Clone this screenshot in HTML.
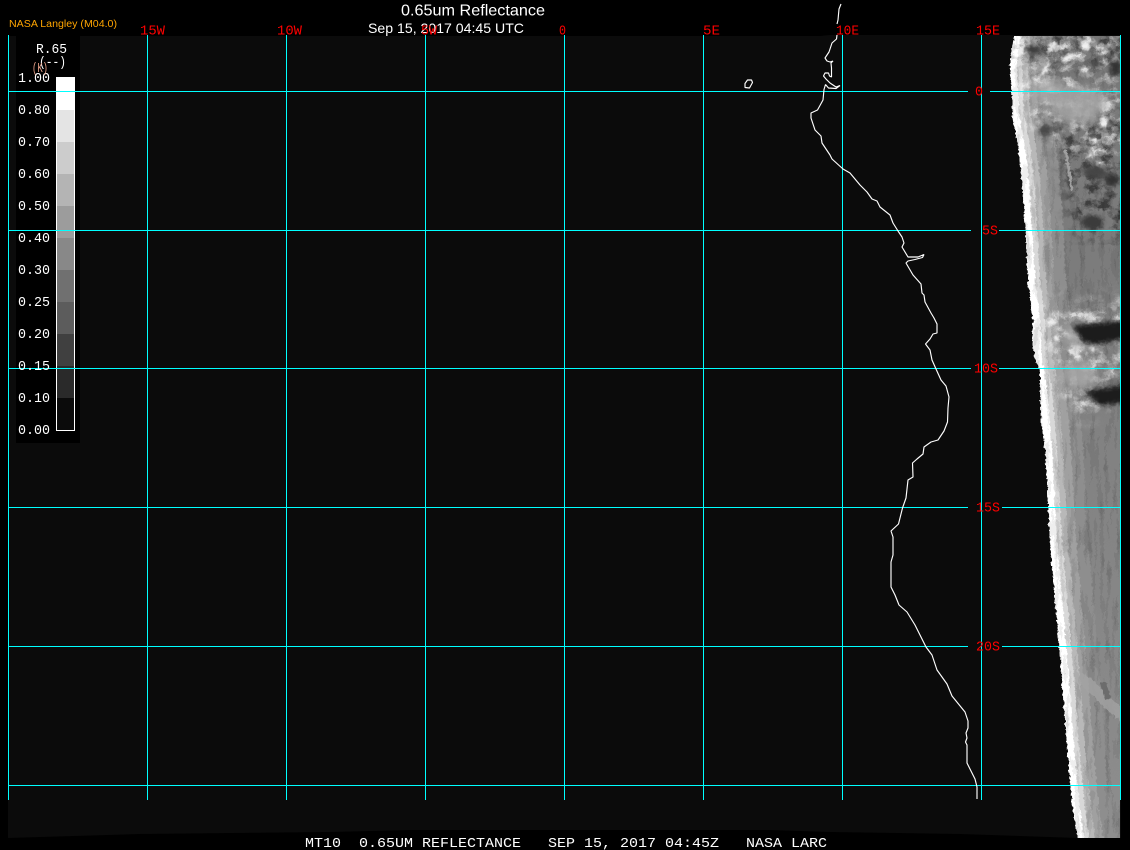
<!DOCTYPE html>
<html lang="en"><head><meta charset="utf-8"><title>0.65um Reflectance</title>
<style>
html,body{margin:0;padding:0;background:#000;width:1130px;height:850px;overflow:hidden}
svg{display:block}
.m{font-family:"Liberation Mono",monospace;font-size:14px}
.s{font-family:"Liberation Sans",sans-serif}
</style></head><body>
<svg width="1130" height="850" viewBox="0 0 1130 850" xmlns="http://www.w3.org/2000/svg">
<defs>
<clipPath id="outer"><rect x="990" y="36" width="130" height="802"/></clipPath>
<clipPath id="disk"><polygon points="1017,20 1012,48 1010,60 1011,78 1012,91 1012,115 1016,135 1021,170 1024,210 1026,240 1028,280 1033,320 1032,340 1035,360 1040,370 1040,390 1041,420 1045,450 1047,480 1050,540 1054,590 1057,620 1059,646 1062,680 1064,710 1067,745 1070,780 1073,810 1078,838 1080,855 1140,855 1140,20"/></clipPath>
<linearGradient id="base" x1="0" y1="0" x2="0" y2="1"><stop offset="0" stop-color="#787878"/><stop offset=".3" stop-color="#7c7c7c"/><stop offset=".6" stop-color="#848484"/><stop offset="1" stop-color="#8e8e8e"/></linearGradient>
<filter id="jit" filterUnits="userSpaceOnUse" x="990" y="15" width="160" height="845" color-interpolation-filters="sRGB"><feTurbulence type="fractalNoise" baseFrequency="0.3" numOctaves="2" seed="3" result="n"/><feDisplacementMap in="SourceGraphic" in2="n" scale="4" xChannelSelector="R" yChannelSelector="G"/></filter>
<filter id="cl" x="0" y="0" width="100%" height="100%"><feTurbulence type="fractalNoise" baseFrequency="0.07 0.09" numOctaves="4" seed="11"/><feColorMatrix values="0 0 0 0 1  0 0 0 0 1  0 0 0 0 1  2.6 0 0 0 -1.0"/><feComponentTransfer><feFuncA type="discrete" tableValues="0 .1 .22 .36 .52 .75"/></feComponentTransfer></filter>
<filter id="dk" x="0" y="0" width="100%" height="100%"><feTurbulence type="fractalNoise" baseFrequency="0.08 0.1" numOctaves="4" seed="29"/><feColorMatrix values="0 0 0 0 0  0 0 0 0 0  0 0 0 0 0  2.8 0 0 0 -1.1"/><feComponentTransfer><feFuncA type="discrete" tableValues="0 .1 .22 .36 .5"/></feComponentTransfer></filter>
<filter id="st" x="0" y="0" width="100%" height="100%"><feTurbulence type="fractalNoise" baseFrequency="0.2 0.025" numOctaves="3" seed="5"/><feColorMatrix values="0 0 0 0 0  0 0 0 0 0  0 0 0 0 0  1.6 0 0 0 -0.62"/><feComponentTransfer><feFuncA type="discrete" tableValues="0 .07 .14 .2"/></feComponentTransfer></filter>
<filter id="b1"><feGaussianBlur stdDeviation="1.2"/></filter>
<filter id="b2"><feGaussianBlur stdDeviation="2"/></filter>
<filter id="b4"><feGaussianBlur stdDeviation="4"/></filter>
<filter id="b9"><feGaussianBlur stdDeviation="9"/></filter>
<mask id="mcl" maskUnits="userSpaceOnUse" x="990" y="15" width="160" height="440"><g fill="#fff" filter="url(#b9)"><polygon points="1015,15 1145,15 1145,150 1090,170 1040,130 1015,110"/><polygon points="1040,305 1145,295 1145,345 1095,420 1070,410 1050,360"/></g></mask>
<mask id="mdk" maskUnits="userSpaceOnUse" x="990" y="15" width="160" height="440"><g fill="#fff" filter="url(#b9)"><polygon points="1050,115 1145,100 1145,240 1075,235"/><polygon points="1015,25 1145,25 1145,65 1015,65"/></g></mask>
</defs>

<polygon fill="#0b0b0b" points="8,36 820,36 830,35 1121,35 1121,838 1078,838 960,834 830,832 770,830 410,830 330,832 140,834 8,838"/>
<rect x="16" y="36" width="64" height="407" fill="#000"/>

<g clip-path="url(#outer)"><g filter="url(#jit)">
<g clip-path="url(#disk)">
<rect x="1000" y="15" width="145" height="845" fill="url(#base)"/>
<g fill="none" stroke-linejoin="round">
<polyline stroke="#8e8e8e" stroke-width="76" points="1017,20 1010,60 1012,115 1016,135 1021,170 1024,210 1026,240 1028,280 1033,320 1035,360 1040,390 1045,450 1050,540 1057,620 1062,680 1067,745 1073,810 1080,860"/>
<polyline stroke="#a0a0a0" stroke-width="52" points="1017,20 1010,60 1012,115 1016,135 1021,170 1024,210 1026,240 1028,280 1033,320 1035,360 1040,390 1045,450 1050,540 1057,620 1062,680 1067,745 1073,810 1080,860"/>
<polyline stroke="#b8b8b8" stroke-width="36" points="1017,20 1010,60 1012,115 1016,135 1021,170 1024,210 1026,240 1028,280 1033,320 1035,360 1040,390 1045,450 1050,540 1057,620 1062,680 1067,745 1073,810 1080,860"/>
<polyline stroke="#d8d8d8" stroke-width="24" points="1017,20 1010,60 1012,115 1016,135 1021,170 1024,210 1026,240 1028,280 1033,320 1035,360 1040,390 1045,450 1050,540 1057,620 1062,680 1067,745 1073,810 1080,860"/>
<polyline stroke="#ffffff" stroke-width="14" points="1017,20 1010,60 1012,115 1016,135 1021,170 1024,210 1026,240 1028,280 1033,320 1035,360 1040,390 1045,450 1050,540 1057,620 1062,680 1067,745 1073,810 1080,860"/>
</g>
<rect x="1000" y="15" width="145" height="425" filter="url(#cl)" mask="url(#mcl)"/>
<rect x="1000" y="15" width="145" height="230" filter="url(#dk)" mask="url(#mdk)"/>
<rect x="1010" y="15" width="135" height="845" filter="url(#st)"/>
<g fill="#f0f0f0" filter="url(#b1)">
<ellipse cx="1085" cy="46" rx="5" ry="5"/><ellipse cx="1068" cy="58" rx="7" ry="3" transform="rotate(-30 1068 58)"/>
<ellipse cx="1052" cy="46" rx="2" ry="7" transform="rotate(35 1052 46)"/>
<ellipse cx="1045" cy="70" rx="2" ry="7" transform="rotate(35 1045 70)"/>
<ellipse cx="1104" cy="122" rx="4" ry="6"/><ellipse cx="1095" cy="140" rx="3" ry="3"/>
<ellipse cx="1090" cy="155" rx="2" ry="2"/><ellipse cx="1100" cy="163" rx="3" ry="2"/>
<ellipse cx="1052" cy="322" rx="6" ry="2"/><ellipse cx="1057" cy="338" rx="3" ry="3"/>
<ellipse cx="1078" cy="357" rx="4" ry="3"/><ellipse cx="1093" cy="349" rx="3" ry="3"/>
</g>
<g fill="#ababab" filter="url(#b4)" opacity=".8">
<ellipse cx="1078" cy="105" rx="28" ry="20"/><ellipse cx="1050" cy="92" rx="20" ry="12"/>
<ellipse cx="1085" cy="335" rx="20" ry="14"/><ellipse cx="1080" cy="375" rx="18" ry="14"/>
</g>
<g filter="url(#b2)">
<polygon fill="#1e1e1e" points="1072,325 1135,320 1135,337 1095,345 1082,342"/>
<polygon fill="#1e1e1e" points="1084,391 1135,383 1135,401 1100,406"/>
<ellipse cx="1033" cy="50" rx="8" ry="5" fill="#3c3c3c"/>
<ellipse cx="1045" cy="130" rx="7" ry="6" fill="#4a4a4a"/>
<ellipse cx="1095" cy="172" rx="12" ry="6" fill="#444"/>
<ellipse cx="1092" cy="222" rx="11" ry="7" fill="#3a3a3a"/>
<ellipse cx="1116" cy="68" rx="6" ry="8" fill="#333"/>
<ellipse cx="1112" cy="180" rx="8" ry="6" fill="#333"/>
</g>
<polygon points="1080,672 1092,680 1130,716 1130,730 1100,703 1078,682" fill="#a2a2a2" opacity=".8"/>
<polygon points="1100,682 1106,682 1111,698 1105,700" fill="#6c6c6c"/>
<polygon points="1064,150 1067,150 1073,190 1071,190" fill="#a0a0a0"/>
</g>
</g></g>
<rect x="1120" y="838" width="10" height="12" fill="#000"/>
<rect x="1121" y="35" width="9" height="805" fill="#000"/>

<g fill="#00ffff" shape-rendering="crispEdges">
<rect x="8" y="35" width="1" height="765"/><rect x="147" y="35" width="1" height="765"/><rect x="286" y="35" width="1" height="765"/><rect x="425" y="35" width="1" height="765"/><rect x="564" y="35" width="1" height="765"/><rect x="703" y="35" width="1" height="765"/><rect x="842" y="35" width="1" height="765"/><rect x="981" y="35" width="1" height="765"/><rect x="1120" y="35" width="1" height="765"/>
<rect x="8" y="91" width="960" height="1"/><rect x="990" y="91" width="131" height="1"/>
<rect x="8" y="230" width="963" height="1"/><rect x="999" y="230" width="122" height="1"/>
<rect x="8" y="368" width="963" height="1"/><rect x="999" y="368" width="122" height="1"/>
<rect x="8" y="507" width="960" height="1"/><rect x="1002" y="507" width="119" height="1"/>
<rect x="8" y="646" width="960" height="1"/><rect x="1002" y="646" width="119" height="1"/>
<rect x="8" y="785" width="1113" height="1"/>
</g>

<g fill="none" stroke="#fff" stroke-width="1.15" stroke-linejoin="bevel">
<polyline points="841,4 839,9 838,20 837,24"/>
<polyline points="837,35 836.5,39 832,43 829,52 825,58 827,61 830,62 833,61 831,63 831.5,68 831.5,77 829.5,76 828.5,73 825,73 823.5,76 826,79 830,83 836,87 840,85.5 836,88.5 828.5,88 825.5,84.5 824,89.5 823,100 817.5,110 811,113 811,118 815,130 821,136 822,143 830,155 832,159 843,169 850,173 860,185 867,192 872,199 877,201 880,207 890,215 893,223 898,231 902,237 904,243 902,247 908,257 918,257 924,254.5 922.5,257.5 915,259.5 908,261 906,263 913,275 921,284 922,293 924,295 925,302 931,313 934,318 937,324 937,333 933,334 930,339 925.5,344 930,350 932,360 936,369 941,380 946,386 949,397 948,408 947.5,422 944,431 938,440 931,442 924,447 923,454 917,459 912.5,463 913,477 908,480 906,498 902.5,508 898.5,524 891,531 893,537 893,555 891,562 891,587 895,595 899,605 907,612 915,625 926,647 932,655 937,670 947,684 952,696 965,712 968,721 968,728 966,733 967,738 965.5,742 967,745 967,763 975,779 977,787 977,799"/>
<polygon points="745,83.5 747.5,80 751.5,80 752.5,82.5 749.5,88 745,87.5"/>
</g>

<text class="s" x="401" y="15.5" font-size="16" fill="#fff" textLength="144" lengthAdjust="spacingAndGlyphs">0.65um Reflectance</text>
<text class="s" x="368" y="33" font-size="14" fill="#fff" textLength="156" lengthAdjust="spacingAndGlyphs">Sep 15, 2017 04:45 UTC</text>
<text class="s" x="9" y="27" font-size="10" fill="#ffa500" textLength="108" lengthAdjust="spacingAndGlyphs">NASA Langley (M04.0)</text>

<g class="m" fill="#ff0000">
<text x="140" y="34.5" textLength="25" lengthAdjust="spacingAndGlyphs">15W</text>
<text x="277" y="34.5" textLength="25" lengthAdjust="spacingAndGlyphs">10W</text>
<text x="421" y="34.5" textLength="16" lengthAdjust="spacingAndGlyphs">5W</text>
<text x="559" y="34.5" textLength="7" lengthAdjust="spacingAndGlyphs">0</text>
<text x="703" y="34.5" textLength="17" lengthAdjust="spacingAndGlyphs">5E</text>
<text x="836" y="34.5" textLength="23" lengthAdjust="spacingAndGlyphs">10E</text>
<text x="976" y="34.5" textLength="24" lengthAdjust="spacingAndGlyphs">15E</text>
<text x="975" y="95.5" textLength="8" lengthAdjust="spacingAndGlyphs">0</text>
<text x="982" y="234.5" textLength="16" lengthAdjust="spacingAndGlyphs">5S</text>
<text x="974" y="372.5" textLength="24" lengthAdjust="spacingAndGlyphs">10S</text>
<text x="976" y="511.5" textLength="24" lengthAdjust="spacingAndGlyphs">15S</text>
<text x="976" y="650.5" textLength="24" lengthAdjust="spacingAndGlyphs">20S</text>
</g>

<g shape-rendering="crispEdges">
<rect x="56" y="77" width="19" height="33" fill="#fff"/>
<rect x="57" y="110" width="17" height="32" fill="#e4e4e4"/>
<rect x="57" y="142" width="17" height="32" fill="#cccccc"/>
<rect x="57" y="174" width="17" height="32" fill="#b4b4b4"/>
<rect x="57" y="206" width="17" height="32" fill="#9c9c9c"/>
<rect x="57" y="238" width="17" height="32" fill="#888888"/>
<rect x="57" y="270" width="17" height="32" fill="#707070"/>
<rect x="57" y="302" width="17" height="32" fill="#5c5c5c"/>
<rect x="57" y="334" width="17" height="32" fill="#404040"/>
<rect x="57" y="366" width="17" height="32" fill="#2a2a2a"/>
<rect x="57" y="398" width="17" height="32" fill="#0b0b0b"/>
<rect x="56" y="77" width="1" height="354" fill="#fff"/><rect x="74" y="77" width="1" height="354" fill="#fff"/><rect x="56" y="430" width="19" height="1" fill="#fff"/>
<rect x="16" y="91" width="64" height="1" fill="#00ffff"/><rect x="16" y="230" width="64" height="1" fill="#00ffff"/><rect x="16" y="368" width="64" height="1" fill="#00ffff"/>
</g>
<g class="m" fill="#fff">
<text x="36" y="53" textLength="31" lengthAdjust="spacingAndGlyphs">R.65</text>
<text x="39" y="66" textLength="27" lengthAdjust="spacingAndGlyphs">(--)</text>
<text x="18" y="82" textLength="32" lengthAdjust="spacingAndGlyphs">1.00</text>
<text x="18" y="114" textLength="32" lengthAdjust="spacingAndGlyphs">0.80</text>
<text x="18" y="146" textLength="32" lengthAdjust="spacingAndGlyphs">0.70</text>
<text x="18" y="178" textLength="32" lengthAdjust="spacingAndGlyphs">0.60</text>
<text x="18" y="210" textLength="32" lengthAdjust="spacingAndGlyphs">0.50</text>
<text x="18" y="242" textLength="32" lengthAdjust="spacingAndGlyphs">0.40</text>
<text x="18" y="274" textLength="32" lengthAdjust="spacingAndGlyphs">0.30</text>
<text x="18" y="306" textLength="32" lengthAdjust="spacingAndGlyphs">0.25</text>
<text x="18" y="338" textLength="32" lengthAdjust="spacingAndGlyphs">0.20</text>
<text x="18" y="370" textLength="32" lengthAdjust="spacingAndGlyphs">0.15</text>
<text x="18" y="402" textLength="32" lengthAdjust="spacingAndGlyphs">0.10</text>
<text x="18" y="434" textLength="32" lengthAdjust="spacingAndGlyphs">0.00</text>
</g>
<text class="m" x="32" y="72" fill="#e8a088" textLength="16" lengthAdjust="spacingAndGlyphs">(K)</text>

<text class="m" x="305" y="847" fill="#fff" xml:space="preserve" textLength="522" lengthAdjust="spacingAndGlyphs">MT10  0.65UM REFLECTANCE   SEP 15, 2017 04:45Z   NASA LARC</text>
</svg>
</body></html>
